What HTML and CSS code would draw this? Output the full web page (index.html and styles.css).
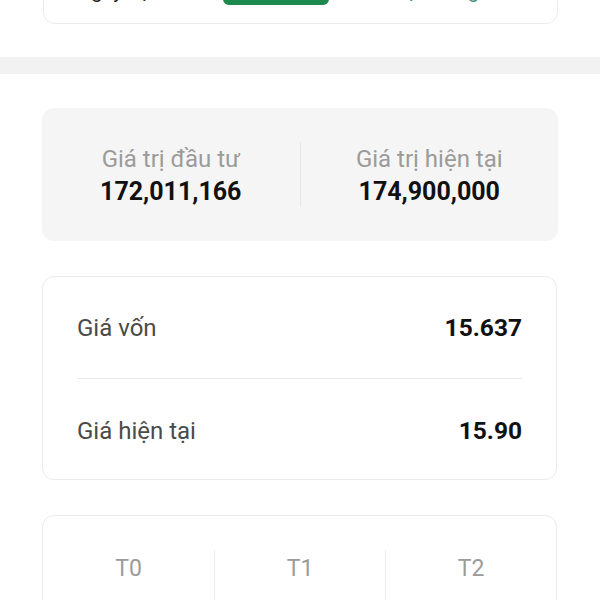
FILE: index.html
```html
<!DOCTYPE html>
<html lang="vi">
<head>
<meta charset="utf-8">
<link rel="stylesheet" href="styles.css">
</head>
<body>
<div class="top-card">
  <span class="top-left">Ngày đặt</span>
  <span class="top-btn"></span>
  <span class="top-right">Lịch sử giao dịch</span>
</div>
<div class="band"></div>
<section class="summary">
  <div class="sum-col">
    <div class="sum-label">Giá trị đầu tư</div>
    <div class="sum-value">172,011,166</div>
  </div>
  <div class="sum-divider"></div>
  <div class="sum-col">
    <div class="sum-label">Giá trị hiện tại</div>
    <div class="sum-value">174,900,000</div>
  </div>
</section>
<section class="prices">
  <div class="price-row">
    <span class="price-label">Giá vốn</span>
    <span class="price-value">15.637</span>
  </div>
  <div class="price-row">
    <span class="price-label">Giá hiện tại</span>
    <span class="price-value">15.90</span>
  </div>
</section>
<section class="settle">
  <div class="settle-col"><span class="settle-label">T0</span></div>
  <div class="settle-col"><span class="settle-label">T1</span></div>
  <div class="settle-col"><span class="settle-label">T2</span></div>
</section>
</body>
</html>
```
FILE: styles.css
```css
* { box-sizing: border-box; }
html, body { margin: 0; padding: 0; background: #fff; }
body {
  font-family: Roboto, "Noto Sans", "DejaVu Sans", sans-serif;
  color: #111;
  overflow: hidden;
}
.top-card {
  height: 62px;
  margin: -38px 42px 0 43px;
  border: 1px solid #ececec;
  border-radius: 12px;
  display: flex;
  align-items: flex-end;
  justify-content: space-between;
  padding: 0 34px 18px 33px;
}
.top-left, .top-right {
  font-size: 20px;
  line-height: 24px;
  margin-bottom: 2px;
}
.top-left { color: #222; width: 76px; white-space: nowrap; overflow: hidden; }
.top-right { color: #4a8f7a; width: 125px; white-space: nowrap; overflow: hidden; }
.top-btn {
  width: 106px;
  height: 36px;
  background: #1d8a4e;
  border-radius: 6px;
}
.band {
  height: 17px;
  margin-top: 33px;
  background: #f2f2f2;
}
.summary {
  margin: 34px 42px 0;
  height: 133px;
  background: #f5f5f5;
  border-radius: 12px;
  display: grid;
  grid-template-columns: 1fr 1px 1fr;
  align-items: center;
}
.sum-col { text-align: center; padding-top: 2px; }
.sum-label {
  font-size: 24px;
  line-height: 32px;
  color: #9b9b9b;
}
.sum-value {
  font-size: 25px;
  line-height: 34px;
  font-weight: 700;
  color: #111;
}
.sum-divider {
  height: 65px;
  background: #e6e6e6;
}
.prices {
  margin: 35px 43px 0 42px;
  border: 1px solid #ebebeb;
  border-radius: 12px;
  padding: 0 34px;
}
.price-row {
  height: 101px;
  display: flex;
  align-items: center;
  justify-content: space-between;
}
.price-row + .price-row { border-top: 1px solid #e8e8e8; padding-top: 3px; }
.price-label {
  font-size: 24px;
  color: #4a4a4a;
}
.price-value {
  font-size: 24.5px;
  font-weight: 700;
  color: #111;
}
.settle {
  margin: 35px 43px 0 42px;
  border: 1px solid #ebebeb;
  border-radius: 12px;
  padding-top: 34px;
  display: grid;
  grid-template-columns: 1fr 1fr 1fr;
}
.settle-col {
  min-height: 100px;
  text-align: center;
}
.settle-col + .settle-col { border-left: 1px solid #ececec; }
.settle-label {
  display: block;
  font-size: 23px;
  line-height: 38px;
  color: #9b9b9b;
}
```
